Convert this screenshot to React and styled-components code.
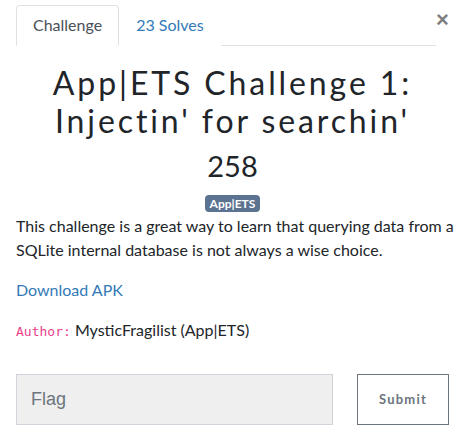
import React from "react";
import styled, { createGlobalStyle } from "styled-components";

const Global = createGlobalStyle`
  html, body { margin: 0; padding: 0; background: #fff; }
  body {
    font-family: Lato, "Open Sans", sans-serif;
    color: #212529;
    font-size: 16px;
    line-height: 1.5;
  }
  * { box-sizing: border-box; }
`;

const Page = styled.div`
  width: 460px;
  height: 435px;
  padding: 5px 6px 0 16px;
  overflow: hidden;
`;

const Header = styled.div`
  display: flex;
  align-items: flex-start;
  width: 433px;
`;

const TabBar = styled.ul`
  flex: 1;
  display: flex;
  list-style: none;
  margin: 0;
  padding: 0;
  border-bottom: 1px solid #dee2e6;
`;

const Tab = styled.li`
  margin-bottom: -1px;
  padding: 7px 16px 8px;
  border: 1px solid ${(p) => (p.$active ? "#dee2e6" : "transparent")};
  border-bottom-color: ${(p) => (p.$active ? "#fff" : "transparent")};
  border-radius: 4px 4px 0 0;
  background: #fff;
  color: ${(p) => (p.$active ? "#495057" : "#337ab7")};
  font-size: 16px;
  line-height: 24px;
  cursor: pointer;
`;

const Close = styled.button`
  width: 13px;
  margin: 4px 0 0;
  padding: 0;
  border: 0;
  background: none;
  font-family: "Liberation Sans", Arial, sans-serif;
  font-size: 22px;
  font-weight: 700;
  line-height: 22px;
  color: #000;
  opacity: 0.5;
  text-align: center;
  overflow: visible;
`;

const TitleBlock = styled.div`
  text-align: center;
  width: 433px;
  margin-top: 18px;
`;

const Title = styled.h2`
  margin: 0;
  font-family: Lato, sans-serif;
  font-weight: 400;
  font-size: 32px;
  line-height: 38.4px;
  letter-spacing: 2.9px;
  color: #212529;
`;

const Points = styled.h4`
  margin: 8px 0 0;
  font-family: Lato, sans-serif;
  font-weight: 400;
  font-size: 29px;
  line-height: 33px;
  color: #212529;
`;

const Badge = styled.span`
  display: inline-block;
  margin-top: 13px;
  padding: 2px 5px;
  border-radius: 4px;
  background: #5b7290;
  color: #fff;
  font-family: Lato, sans-serif;
  font-weight: 700;
  font-size: 12px;
  line-height: 13px;
`;

const Description = styled.div`
  margin-top: 0;
  & p {
    margin: 0 0 16px;
  }
`;

const Link = styled.a`
  color: #337ab7;
  text-decoration: none;
`;

const Code = styled.code`
  font-family: "DejaVu Sans Mono", "Liberation Mono", monospace;
  font-size: 13px;
  color: #e83e8c;
`;

const FlagRow = styled.div`
  display: flex;
  gap: 24px;
  margin-top: 32px;
`;

const FlagInput = styled.input`
  width: 317px;
  height: 51px;
  padding: 0 14px;
  border: 1px solid #ced4da;
  background: #efefef;
  font-family: "Liberation Sans", Arial, sans-serif;
  font-size: 18px;
  color: #495057;
  outline: none;
  &::placeholder {
    color: #6c757d;
  }
`;

const SubmitButton = styled.button`
  width: 92px;
  height: 51px;
  border: 1px solid #6c757d;
  background: #fff;
  color: #6c757d;
  font-family: Lato, sans-serif;
  font-weight: 700;
  font-size: 13px;
  letter-spacing: 1.2px;
`;

export default function App() {
  return (
    <>
      <Global />
      <Page>
        <Header>
          <TabBar>
            <Tab $active>Challenge</Tab>
            <Tab>23 Solves</Tab>
          </TabBar>
          <Close aria-label="Close">×</Close>
        </Header>
        <TitleBlock>
          <Title>
            App|ETS Challenge 1:
            <br />
            Injectin' for searchin'
          </Title>
          <Points>258</Points>
          <Badge>App|ETS</Badge>
        </TitleBlock>
        <Description>
          <p>
            This challenge is a great way to learn that querying data from a
            SQLite internal database is not always a wise choice.
          </p>
          <p>
            <Link href="#">Download APK</Link>
          </p>
          <p>
            <Code>Author:</Code> MysticFragilist (App|ETS)
          </p>
        </Description>
        <FlagRow>
          <FlagInput placeholder="Flag" />
          <SubmitButton>Submit</SubmitButton>
        </FlagRow>
      </Page>
    </>
  );
}
